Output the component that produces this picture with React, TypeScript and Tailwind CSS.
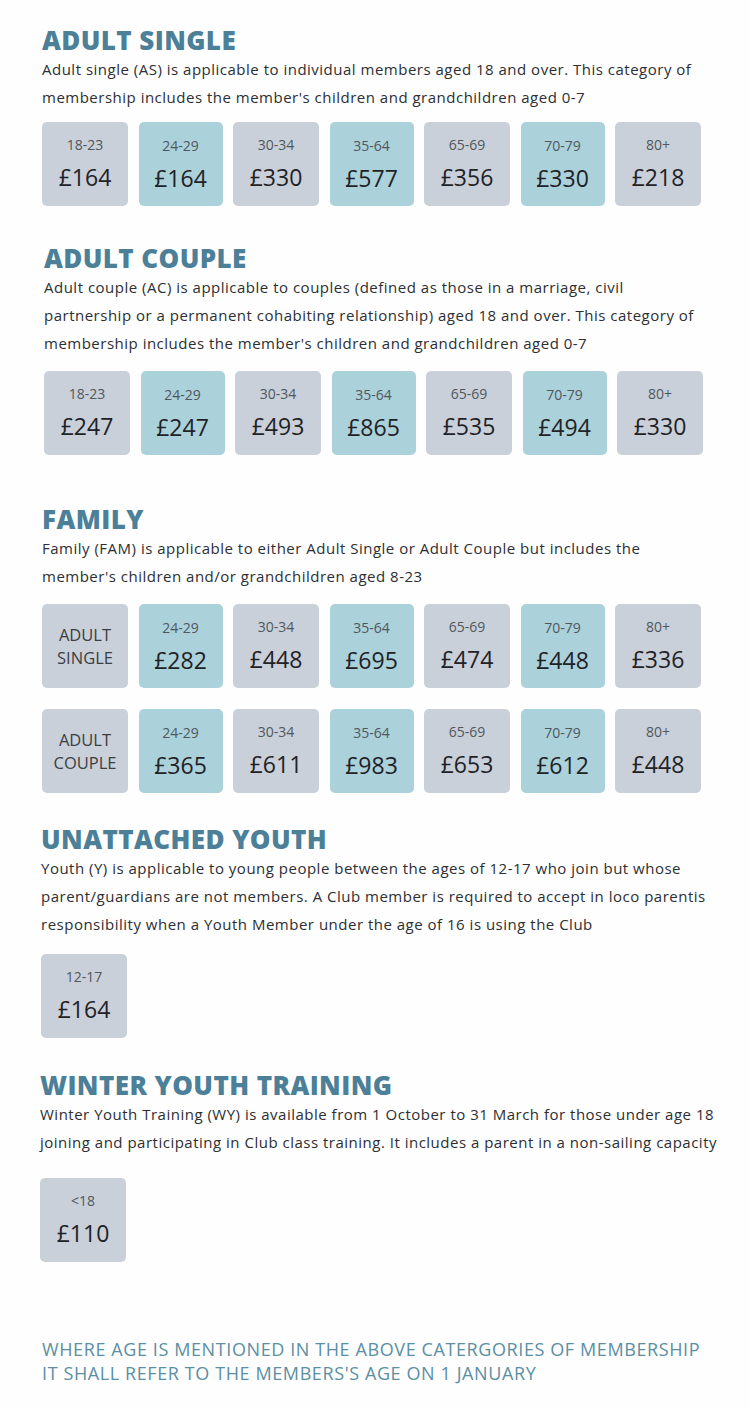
import React from 'react';

type Tier = { age: string; price: string };

const ages = ['18-23', '24-29', '30-34', '35-64', '65-69', '70-79', '80+'];

const single = ['£164', '£164', '£330', '£577', '£356', '£330', '£218'];
const couple = ['£247', '£247', '£493', '£865', '£535', '£494', '£330'];
const famSingle = ['£282', '£448', '£695', '£474', '£448', '£336'];
const famCouple = ['£365', '£611', '£983', '£653', '£612', '£448'];

const toTiers = (prices: string[], list: string[]): Tier[] =>
  prices.map((price, i) => ({ age: list[i], price }));

const PriceBox = ({ age, price, teal }: { age: string; price: string; teal?: boolean }) => (
  <div
    className={
      teal
        ? 'w-[84px] h-[84px] rounded-[5px] bg-[#abd1db] flex flex-col items-center pt-[14px]'
        : 'w-[86px] h-[84px] rounded-[5px] bg-[#c9d0d9] flex flex-col items-center pt-[13px]'
    }
  >
    <span className="text-[14px] leading-[20px] text-[#50575e]">{age}</span>
    <span className="mt-[8px] text-[23px] leading-[28px] text-[#1f2226]">{price}</span>
  </div>
);

const LabelBox = ({ lines }: { lines: string[] }) => (
  <div className="w-[86px] h-[84px] rounded-[5px] bg-[#c9d0d9] flex flex-col items-center justify-center">
    {lines.map((l) => (
      <span key={l} className="text-[16.5px] leading-[23px] text-[#3a3f45]">
        {l}
      </span>
    ))}
  </div>
);

const Row = ({ tiers, label }: { tiers: Tier[]; label?: string[] }) => (
  <div className="flex gap-[10.5px]">
    {label && <LabelBox lines={label} />}
    {tiers.map((t, i) => (
      <PriceBox key={t.age} age={t.age} price={t.price} teal={label ? i % 2 === 0 : i % 2 === 1} />
    ))}
  </div>
);

const Heading = ({ children }: { children: React.ReactNode }) => (
  <h2 className="text-[26px] leading-[30px] font-extrabold tracking-[0.4px] text-[#4c7f98]">{children}</h2>
);

const Body = ({ children }: { children: React.ReactNode }) => (
  <p className="text-[15px] leading-[28px] tracking-[0.5px] text-[#2c2f33]">{children}</p>
);

export default function App() {
  return (
    <div className="min-h-screen w-[750px] bg-[#fefefe] pt-[25px] pb-[20px] font-['Open_Sans',sans-serif]">
      {/* Adult single */}
      <section className="pl-[42px]">
        <Heading>ADULT SINGLE</Heading>
        <Body>
          Adult single (AS) is applicable to individual members aged 18 and over. This category of
          <br />
          membership includes the member's children and grandchildren aged 0-7
        </Body>
        <div className="mt-[11px]">
          <Row tiers={toTiers(single, ages)} />
        </div>
      </section>

      {/* Adult couple */}
      <section className="pl-[44px] mt-[37px]">
        <Heading>ADULT COUPLE</Heading>
        <Body>
          Adult couple (AC) is applicable to couples (defined as those in a marriage, civil
          <br />
          partnership or a permanent cohabiting relationship) aged 18 and over. This category of
          <br />
          membership includes the member's children and grandchildren aged 0-7
        </Body>
        <div className="mt-[14px]">
          <Row tiers={toTiers(couple, ages)} />
        </div>
      </section>

      {/* Family */}
      <section className="pl-[42px] mt-[49px]">
        <Heading>FAMILY</Heading>
        <Body>
          Family (FAM) is applicable to either Adult Single or Adult Couple but includes the
          <br />
          member's children and/or grandchildren aged 8-23
        </Body>
        <div className="mt-[14px] flex flex-col gap-[21px]">
          <Row tiers={toTiers(famSingle, ages.slice(1))} label={['ADULT', 'SINGLE']} />
          <Row tiers={toTiers(famCouple, ages.slice(1))} label={['ADULT', 'COUPLE']} />
        </div>
      </section>

      {/* Unattached youth */}
      <section className="pl-[41px] mt-[31px]">
        <Heading>UNATTACHED YOUTH</Heading>
        <Body>
          Youth (Y) is applicable to young people between the ages of 12-17 who join but whose
          <br />
          parent/guardians are not members. A Club member is required to accept in loco parentis
          <br />
          responsibility when a Youth Member under the age of 16 is using the Club
        </Body>
        <div className="mt-[16px]">
          <PriceBox age="12-17" price="£164" />
        </div>
      </section>

      {/* Winter youth training */}
      <section className="pl-[40px] mt-[32px]">
        <Heading>WINTER YOUTH TRAINING</Heading>
        <Body>
          Winter Youth Training (WY) is available from 1 October to 31 March for those under age 18
          <br />
          joining and participating in Club class training. It includes a parent in a non-sailing capacity
        </Body>
        <div className="mt-[22px]">
          <PriceBox age="<18" price="£110" />
        </div>
      </section>

      <p className="pl-[42px] mt-[75px] whitespace-nowrap text-[18px] leading-[24px] tracking-[0.6px] text-[#5b8fa3] font-['Open_Sans',sans-serif]">
        WHERE AGE IS MENTIONED IN THE ABOVE CATERGORIES OF MEMBERSHIP
        <br />
        IT SHALL REFER TO THE MEMBERS'S AGE ON 1 JANUARY
      </p>
    </div>
  );
}
